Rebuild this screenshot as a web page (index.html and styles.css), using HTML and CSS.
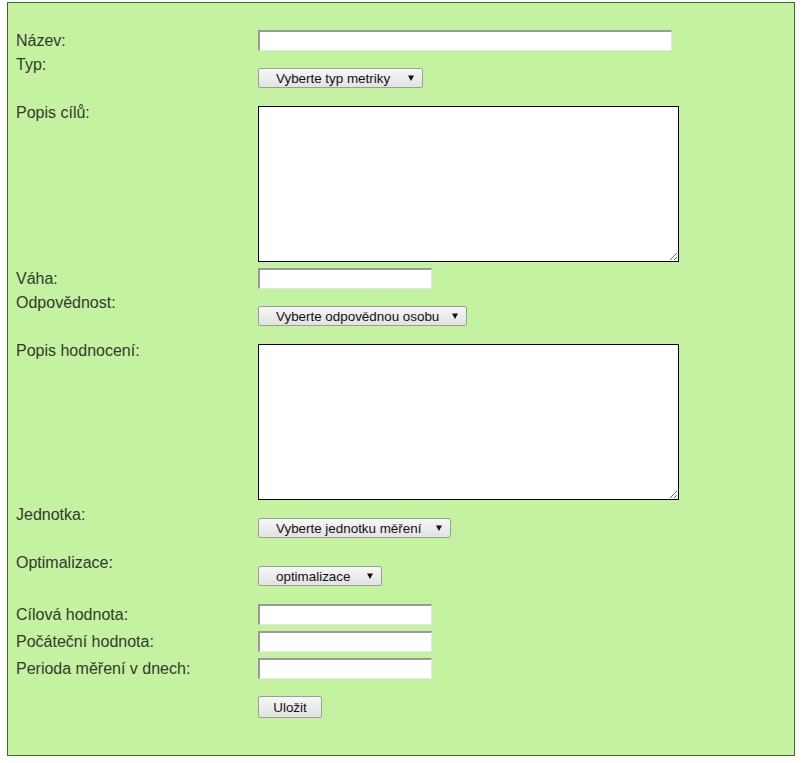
FILE: index.html
```html
<!DOCTYPE html>
<html lang="cs">
<head>
  <meta charset="UTF-8">
  <title>Metrika</title>
  <link rel="stylesheet" href="styles.css">
</head>
<body>
  <form class="metric-form">
    <div class="row row-input">
      <label class="label" for="nazev">Název:</label>
      <input type="text" id="nazev" class="field field-wide">
    </div>
    <div class="row">
      <label class="label" for="typ">Typ:</label>
      <select id="typ" class="pick pick-typ">
        <option>Vyberte typ metriky</option>
      </select>
    </div>
    <div class="row">
      <label class="label" for="cile">Popis cílů:</label>
      <textarea id="cile" class="area"></textarea>
    </div>
    <div class="row row-input">
      <label class="label" for="vaha">Váha:</label>
      <input type="text" id="vaha" class="field">
    </div>
    <div class="row">
      <label class="label" for="odp">Odpovědnost:</label>
      <select id="odp" class="pick pick-odp">
        <option>Vyberte odpovědnou osobu</option>
      </select>
    </div>
    <div class="row">
      <label class="label" for="hodnoceni">Popis hodnocení:</label>
      <textarea id="hodnoceni" class="area"></textarea>
    </div>
    <div class="row">
      <label class="label" for="jednotka">Jednotka:</label>
      <select id="jednotka" class="pick pick-jednotka">
        <option>Vyberte jednotku měření</option>
      </select>
    </div>
    <div class="row">
      <label class="label" for="opt">Optimalizace:</label>
      <select id="opt" class="pick pick-opt">
        <option>optimalizace</option>
      </select>
    </div>
    <div class="row row-input">
      <label class="label" for="cil">Cílová hodnota:</label>
      <input type="text" id="cil" class="field">
    </div>
    <div class="row row-input">
      <label class="label" for="start">Počáteční hodnota:</label>
      <input type="text" id="start" class="field">
    </div>
    <div class="row row-input">
      <label class="label" for="perioda">Perioda měření v dnech:</label>
      <input type="text" id="perioda" class="field">
    </div>
    <div class="row row-submit">
      <span class="label"></span>
      <button type="button" class="save">Uložit</button>
    </div>
  </form>
</body>
</html>
```

FILE: styles.css
```css
body {
  margin: 0;
  font-family: 'Liberation Sans', Arial, sans-serif;
  color: #333;
  background: #fff;
}

.metric-form {
  box-sizing: border-box;
  width: 788px;
  height: 754px;
  margin: 2px 0 0 7px;
  padding: 27px 8px 0 8px;
  background-color: #c4f2a0;
  border: 1px solid #3d6b22;
  display: flex;
  flex-direction: column;
  gap: 5px;
}

.row {
  display: flex;
  align-items: flex-start;
}

.row-input {
  align-items: center;
}

.row-input + .row-input {
  margin-top: 1px;
}

.label {
  width: 242px;
  flex: none;
  font-size: 16px;
  line-height: 18px;
  color: #323a2e;
}

.field {
  box-sizing: border-box;
  width: 174px;
  height: 21px;
  margin: 0;
  padding: 1px 3px;
  background: #fff;
  border-style: solid;
  border-width: 2px 1px 1px 2px;
  border-color: #9a9a9a #e6e6e6 #e6e6e6 #9a9a9a;
  font: 13px 'Liberation Sans', Arial, sans-serif;
}

.field-wide {
  width: 414px;
}

.area {
  box-sizing: border-box;
  width: 421px;
  height: 156px;
  margin: 2px 0 1px 0;
  padding: 2px;
  border: 1px solid #000;
  background: #fff;
  font: 13px 'Liberation Mono', monospace;
  display: block;
}

.pick {
  box-sizing: border-box;
  height: 20px;
  margin: 12px 0 11px 0;
  padding: 0 0 0 17px;
  border: 1px solid #9c9c9c;
  border-radius: 2px;
  -webkit-appearance: none;
  appearance: none;
  color: #111;
  font: 13.4px 'Liberation Sans', Arial, sans-serif;
  background-color: #ececec;
  background-image: url("data:image/svg+xml,<svg xmlns='http://www.w3.org/2000/svg' width='6' height='6' viewBox='0 0 6 6'><path d='M0 0.5h6L3 6z' fill='%23111'/></svg>"), linear-gradient(#f7f7f7, #e2e2e2);
  background-repeat: no-repeat, no-repeat;
  background-position: right 8px center, 0 0;
  background-size: 6px 6px, 100% 100%;
}

.pick-typ { width: 165px; }
.pick-odp { width: 209px; }
.pick-jednotka { width: 193px; }

.pick-opt {
  width: 124px;
  margin-bottom: 13px;
}

.row-submit {
  margin-top: 12px;
}

.save {
  box-sizing: border-box;
  width: 64px;
  height: 22px;
  margin: 0;
  padding: 0;
  border: 1px solid #9c9c9c;
  border-radius: 2px;
  color: #111;
  font: 13.4px 'Liberation Sans', Arial, sans-serif;
  background: linear-gradient(#f7f7f7, #e2e2e2);
}
```
